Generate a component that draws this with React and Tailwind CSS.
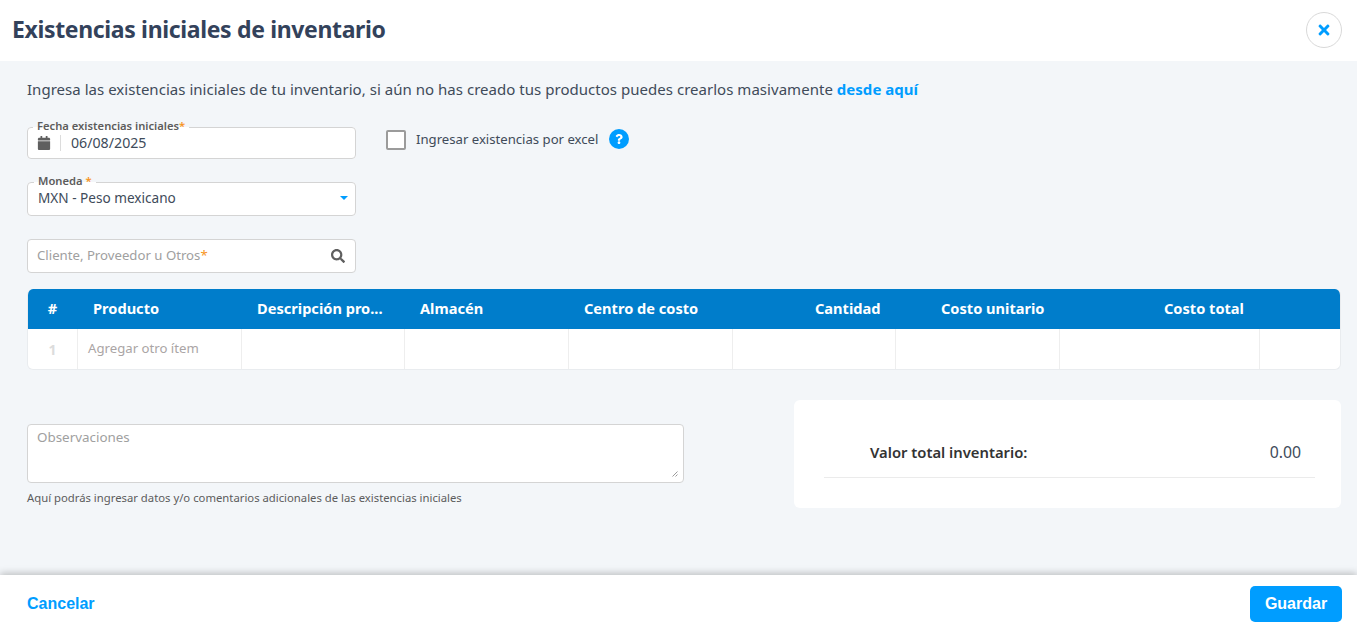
import React from 'react';
import { FaCalendar, FaSearch, FaTimes, FaQuestion } from 'react-icons/fa';

const columns = [
    { label: 'Producto', width: 'w-[164px]', align: 'pl-[16px]' },
    { label: 'Descripción pro...', width: 'w-[163px]', align: 'pl-[16px]' },
    { label: 'Almacén', width: 'w-[164px]', align: 'pl-[16px]' },
    { label: 'Centro de costo', width: 'w-[164px]', align: 'pl-[16px]' },
    { label: 'Cantidad', width: 'w-[163px]', align: 'pl-[83px]' },
    { label: 'Costo unitario', width: 'w-[164px]', align: 'pl-[46px]' },
    { label: 'Costo total', width: 'w-[200px]', align: 'pl-[105px]' },
];

function Req() {
    return <span className="text-[#f7941d]">*</span>;
}

export default function App() {
    return (
        <div className="flex h-[627px] w-[1357px] flex-col overflow-hidden bg-[#f3f6f9] font-['Noto_Sans',sans-serif] text-[#3a4a5e]">
            {/* Header */}
            <header className="flex h-[61px] shrink-0 items-center justify-between bg-white pb-[2px] pl-[12px] pr-[15px]">
                <h1 className="text-[23px] font-bold tracking-[-0.35px] text-[#33425b]">Existencias iniciales de inventario</h1>
                <button className="flex h-[36px] w-[36px] items-center justify-center rounded-full border border-[#d9d9d9] bg-white text-[#009dff]">
                    <FaTimes className="text-[16px]" />
                </button>
            </header>

            {/* Body */}
            <main className="flex-1 pl-[27px] pr-[16px] pt-[18px]">
                <p className="text-[15px] leading-[20px] tracking-[0.03px] text-[#404b5a]">
                    Ingresa las existencias iniciales de tu inventario, si aún no has creado tus productos puedes crearlos masivamente{' '}
                    <a className="font-bold text-[#009dff]">desde aquí</a>
                </p>

                <div className="mt-[22px] flex items-start">
                    <div className="w-[329px]">
                        <fieldset className="h-[38px] rounded-[4px] border border-[#d4d4d4] bg-white pl-[9px]">
                            <legend className="ml-[-4px] px-[4px] pb-[3px] text-[11.2px] font-semibold leading-[10px] text-[#5c5c5c]">Fecha existencias iniciales<Req /></legend>
                            <div className="flex h-[18px] items-center">
                                <FaCalendar className="text-[14px] text-[#5f5f5f]" />
                                <span className="ml-[9px] h-[16px] border-l border-[#dcdcdc]" />
                                <span className="ml-[10px] text-[14.2px] text-[#404b5a]">06/08/2025</span>
                            </div>
                        </fieldset>
                    </div>
                    <div className="ml-[30px] mt-[9px] flex items-center">
                        <span className="h-[20px] w-[20px] rounded-[2px] border-2 border-[#9b9b9b] bg-white" />
                        <span className="ml-[10px] text-[13.15px] text-[#404b5a]">Ingresar existencias por excel</span>
                        <span className="ml-[11px] -mt-[2px] flex h-[20px] w-[20px] items-center justify-center rounded-full bg-[#009dff] text-white">
                            <FaQuestion className="text-[10px]" />
                        </span>
                    </div>
                </div>

                <fieldset className="mt-[17px] h-[40px] w-[329px] rounded-[4px] border border-[#d4d4d4] bg-white pl-[10px] pr-[7px]">
                    <legend className="ml-[-4px] px-[4px] pb-[3px] text-[11.2px] font-semibold leading-[10px] text-[#5c5c5c]">Moneda <Req /></legend>
                    <div className="flex h-[18px] items-center justify-between">
                        <span className="text-[13.6px] text-[#404b5a]">MXN - Peso mexicano</span>
                        <span className="h-0 w-0 border-x-[4px] border-t-[4px] border-x-transparent border-t-[#009dff]" />
                    </div>
                </fieldset>

                <div className="mt-[23px] flex h-[34px] w-[329px] items-center justify-between rounded-[4px] border border-[#d4d4d4] bg-white pl-[9px] pr-[10px]">
                    <span className="text-[13.2px] text-[#a0a0a0]">Cliente, Proveedor u Otros<Req /></span>
                    <FaSearch className="text-[14px] text-[#5f5f5f]" />
                </div>

                {/* Table */}
                <div className="mt-[16px] w-[1314px] overflow-hidden rounded-[6px] border-x border-b border-[#e9ecef] bg-white">
                    <div className="flex h-[40px] items-center bg-[#007dcb] pb-[1px] text-[14.6px] font-bold text-white">
                        <span className="w-[49px] text-center">#</span>
                        {columns.map((col) => (
                            <span key={col.label} className={`${col.width} ${col.align} shrink-0 whitespace-nowrap`}>{col.label}</span>
                        ))}
                    </div>
                    <div className="flex h-[40px] items-stretch">
                        <span className="flex w-[50px] items-center justify-center border-r border-[#eeeeee] text-[14px] font-bold text-[#dcdcdc]">1</span>
                        <span className="flex w-[164px] items-center border-r border-[#eeeeee] pl-[10px] text-[13.2px] text-[#aaa5a5]">Agregar otro ítem</span>
                        <span className="w-[163px] border-r border-[#eeeeee]" />
                        <span className="w-[164px] border-r border-[#eeeeee]" />
                        <span className="w-[164px] border-r border-[#eeeeee]" />
                        <span className="w-[163px] border-r border-[#eeeeee]" />
                        <span className="w-[164px] border-r border-[#eeeeee]" />
                        <span className="w-[200px] border-r border-[#eeeeee]" />
                    </div>
                </div>

                {/* Bottom */}
                <div className="mt-[30px] flex items-start justify-between">
                    <div className="mt-[24px] w-[657px]">
                        <div className="relative h-[59px] rounded-[4px] border border-[#d4d4d4] bg-white px-[9px] py-[2px] text-[13.4px] text-[#a0a0a0]">
                            Observaciones
                            <svg className="absolute bottom-[5px] right-[5px]" width="6" height="6" viewBox="0 0 6 6">
                                <path d="M0.5 5.5L5.5 0.5M3.5 5.5L5.5 3.5" stroke="#9a9a9a" strokeWidth="1" />
                            </svg>
                        </div>
                        <p className="mt-[8px] text-[11.3px] leading-[14px] text-[#5c5c5c]">Aquí podrás ingresar datos y/o comentarios adicionales de las existencias iniciales</p>
                    </div>
                    <div className="h-[108px] w-[547px] rounded-[6px] bg-white pl-[30px] pr-[26px] pt-[41px]">
                        <div className="flex h-[37px] items-start justify-between border-b border-[#ebebeb] pl-[46px] pr-[14px]">
                            <span className="text-[14.8px] font-semibold text-[#333333]">Valor total inventario:</span>
                            <span className="text-[15.8px] text-[#404b5a]">0.00</span>
                        </div>
                    </div>
                </div>
            </main>

            {/* Footer */}
            <footer className="z-10 flex h-[52px] shrink-0 items-center justify-between bg-white pl-[27px] pr-[15px] pt-[6px] font-['Liberation_Sans',sans-serif] shadow-[0_-2px_7px_rgba(0,0,0,0.22)]">
                <a className="text-[16px] font-bold text-[#009dff]">Cancelar</a>
                <button className="h-[36px] w-[92px] rounded-[5px] bg-[#009dff] text-[16px] font-bold text-white">Guardar</button>
            </footer>
        </div>
    );
}
